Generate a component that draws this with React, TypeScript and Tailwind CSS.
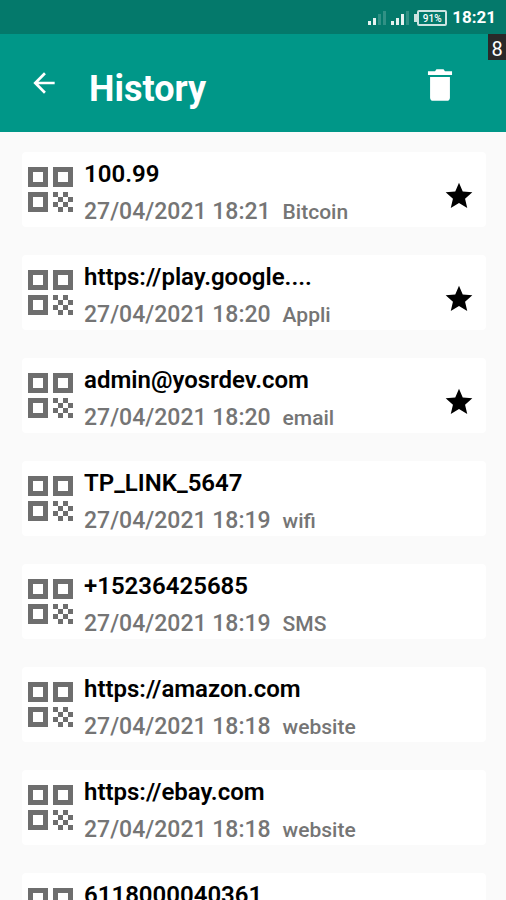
import React from "react";

type Entry = { title: string; date: string; kind: string; starred?: boolean };

const entries: Entry[] = [
  { title: "100.99", date: "27/04/2021 18:21", kind: "Bitcoin", starred: true },
  { title: "https://play.google....", date: "27/04/2021 18:20", kind: "Appli", starred: true },
  { title: "admin@yosrdev.com", date: "27/04/2021 18:20", kind: "email", starred: true },
  { title: "TP_LINK_5647", date: "27/04/2021 18:19", kind: "wifi" },
  { title: "+15236425685", date: "27/04/2021 18:19", kind: "SMS" },
  { title: "https://amazon.com", date: "27/04/2021 18:18", kind: "website" },
  { title: "https://ebay.com", date: "27/04/2021 18:18", kind: "website" },
  { title: "6118000040361", date: "", kind: "" },
];

function QrIcon() {
  return (
    <svg viewBox="0 0 18 18" className="size-[45px] shrink-0 fill-[#6e6e6e]" aria-hidden="true">
      <path
        fillRule="evenodd"
        d="M0 0h8v8H0zM2 2v4h4V2zM10 0h8v8h-8zM12 2v4h4V2zM0 10h8v8H0zM2 12v4h4v-4z"
      />
      <path d="M10 10h2v2h-2zM14 10h2v2h-2zM12 12h2v2h-2zM16 12h2v2h-2zM10 14h2v2h-2zM14 14h2v2h-2zM12 16h2v2h-2zM16 16h2v2h-2z" />
    </svg>
  );
}

function SignalIcon({ bars }: { bars: number }) {
  return (
    <svg viewBox="0 0 18 16" className="h-4 w-[18px] fill-white" aria-hidden="true">
      {[4, 7, 11, 14].map((h, i) => (
        <rect key={h} x={i * 5} y={15 - h} width="3" height={h} opacity={i < bars ? 0.9 : 0.18} />
      ))}
    </svg>
  );
}

export default function App() {
  return (
    <div className="flex h-screen flex-col overflow-hidden bg-[#fafafa] font-['Roboto',sans-serif]">
      <div className="flex h-[34px] shrink-0 items-center justify-end gap-[5px] bg-[#04796b] pt-0.5 pr-2.5 text-white">
        <SignalIcon bars={2} />
        <SignalIcon bars={3} />
        <div className="flex items-center">
          <span className="h-2 w-[3px] bg-white/80" />
          <span className="flex h-4 w-[30px] items-center justify-center rounded-xs border-2 border-white/80 text-[10px] font-medium">
            91%
          </span>
        </div>
        <span className="text-[17px] font-bold">18:21</span>
      </div>
      <header className="relative flex h-[98px] shrink-0 items-center bg-[#009788] pr-[49px] pl-7 text-white">
        <button type="button" aria-label="Back" className="size-8">
          <svg viewBox="0 0 24 24" className="size-8 fill-white" aria-hidden="true">
            <path d="M20 11H7.83l5.59-5.59L12 4l-8 8 8 8 1.41-1.41L7.83 13H20z" />
          </svg>
        </button>
        <h1 className="mt-3 ml-[29px] grow text-[36px] leading-10 font-bold">History</h1>
        <button type="button" aria-label="Delete history" className="mt-1 h-[38px] w-[34px]">
          <svg viewBox="0 0 24 24" preserveAspectRatio="none" className="h-[38px] w-[34px] fill-white" aria-hidden="true">
            <path d="M5 20c0 1.1.9 2 2 2h10c1.1 0 2-.9 2-2V7H5zM20.500 3.300h-5l-1-1.300h-5l-1 1.300h-5v2.400h17z" />
          </svg>
        </button>
        <span className="absolute top-0 right-0 flex h-[26px] w-[18px] items-center justify-center bg-[#292929] pt-1 text-[20px]">
          8
        </span>
      </header>
      <main className="min-h-0 grow overflow-hidden px-5 pt-5">
        <ul className="flex flex-col gap-7 pl-0.5">
          {entries.map((e) => (
            <li key={e.title} className="flex h-[75px] items-center rounded-sm bg-white pr-[11px] pl-1.5">
              <QrIcon />
              <div className="ml-[11px] grow pt-2 whitespace-nowrap">
                <p className="text-[24px] leading-9 font-semibold text-black">{e.title}</p>
                <p className="flex h-10 items-baseline gap-3 font-medium text-[#757575]">
                  <span className="text-[23px] leading-10">{e.date}</span>
                  <span className="text-[21px]">{e.kind}</span>
                </p>
              </div>
              {e.starred && (
                <button type="button" aria-label={"Unstar " + e.title} className="mt-3 size-8">
                  <svg viewBox="0 0 24 24" className="size-8 fill-black" aria-hidden="true">
                    <path d="M12 17.270 18.180 21l-1.640-7.030L22 9.240l-7.190-.61L12 2 9.190 8.630 2 9.240l5.460 4.730L5.820 21z" />
                  </svg>
                </button>
              )}
            </li>
          ))}
        </ul>
      </main>
    </div>
  );
}
